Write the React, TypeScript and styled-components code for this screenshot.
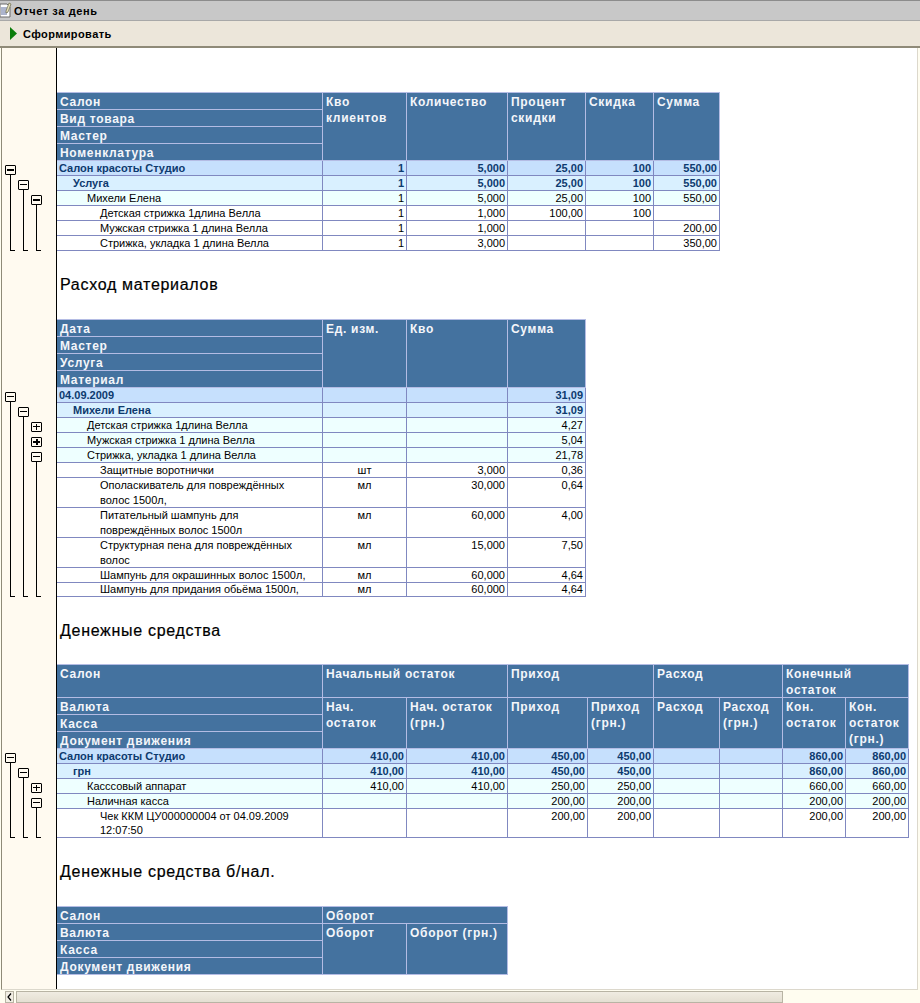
import React from 'react';
import styled, {createGlobalStyle} from 'styled-components';

const GlobalStyle = createGlobalStyle`
  html, body {
    margin: 0;
    padding: 0;
    height: 100%;
    overflow: hidden;
    background: #fffdf0;
  }
`;

// window chrome
const Window = styled.div`
  width: 920px;
  height: 1003px;
  display: flex;
  flex-direction: column;
  font-family: "Liberation Sans", Arial, sans-serif;
  background: #fffdf0;
`;

const TitleBar = styled.div`
  height: 21px;
  box-sizing: border-box;
  display: flex;
  align-items: center;
  gap: 2px;
  background: #c8c8c8;
  border-top: 1px solid #8c8c8c;
  border-bottom: 1px solid #a8a8a8;
  font-size: 11px;
  font-weight: bold;
  letter-spacing: 0.6px;
  color: #000;
`;

const Toolbar = styled.div`
  height: 27px;
  box-sizing: border-box;
  display: flex;
  align-items: center;
  gap: 6px;
  padding-left: 10px;
  background: #ece6da;
  border-bottom: 2px solid #8f8a78;
  font-size: 11px;
  font-weight: bold;
  letter-spacing: 0.4px;
  color: #000;
`;

const Sheet = styled.div`
  flex: 1;
  min-height: 0;
  margin-left: 1px;
  margin-right: 2px;
  display: flex;
  flex-direction: column;
  overflow: hidden;
  background: #fff;
  border-left: 1px solid #8f8a78;
  border-bottom: 1px solid #dcd8cc;
  border-right: 1px solid #dcd8cc;
`;

const Band = styled.div<{$h?: number; $fill?: boolean}>`
  display: flex;
  flex: ${props => props.$fill ? 1 : 'none'};
  height: ${props => props.$h ? props.$h + 'px' : 'auto'};
`;

const Gutter = styled.div`
  width: 54px;
  flex: none;
  box-sizing: content-box;
  background: #fffaf0;
  border-right: 1px solid #000;
`;

const Heading = styled.h2`
  margin: 0;
  padding-left: 3px;
  align-self: center;
  font-size: 16px;
  font-weight: normal;
  letter-spacing: 0.7px;
  -webkit-text-stroke: 0.2px #000;
  color: #000;
`;

const ScrollBar = styled.div`
  height: 13px;
  display: flex;
  gap: 2px;
  padding: 1px 0 0 5px;
  box-sizing: border-box;
`;

const ScrollArrow = styled.div`
  width: 7px;
  height: 10px;
  display: flex;
  align-items: center;
  justify-content: center;
  border: 1px solid #b8b4a4;
  background: #f2eee4;
`;

const ScrollThumb = styled.div`
  width: 765px;
  height: 10px;
  border: 1px solid #b8b4a4;
  background: linear-gradient(#f0ece2, #e4dfd2);
`;

// outline tree in the gutter
const Outline = styled.div<{$top: number; $rows: string}>`
  margin-top: ${props => props.$top}px;
  padding-left: 3px;
  display: grid;
  grid-template-columns: repeat(3, 13px);
  grid-template-rows: ${props => props.$rows};
`;

const Bracket = styled.div<{$level: number; $from: number; $to: number}>`
  grid-column: ${props => props.$level + 1};
  grid-row: ${props => props.$from} / ${props => props.$to};
  display: flex;
  flex-direction: column;
  padding-top: 4px;
`;

const Stem = styled.div`
  flex: 1;
  width: 5px;
  margin-left: 5px;
  box-sizing: border-box;
  border-left: 1px solid #000;
  border-bottom: 1px solid #000;
`;

const Leaf = styled.div<{$level: number; $row: number}>`
  grid-column: ${props => props.$level + 1};
  grid-row: ${props => props.$row};
  padding-top: 4px;
`;

const Toggle = styled.div<{$bold?: boolean}>`
  width: 11px;
  height: 10px;
  flex: none;
  box-sizing: border-box;
  position: relative;
  background: #fffaf0;
  border: 1px solid #000;
  border-radius: 1px;
  &::before {
    content: '';
    position: absolute;
    left: 1px;
    right: 1px;
    top: 3px;
    height: ${props => props.$bold ? 2 : 1}px;
    background: #000;
  }
`;

const PlusToggle = styled(Toggle)`
  &::after {
    content: '';
    position: absolute;
    top: 1px;
    bottom: 1px;
    left: 4px;
    width: ${props => props.$bold ? 2 : 1}px;
    margin-left: ${props => props.$bold ? -0.5 : 0}px;
    background: #000;
  }
`;

// report tables
const Report = styled.table<{$width: number}>`
  width: ${props => props.$width}px;
  table-layout: fixed;
  border-collapse: separate;
  border-spacing: 0;
  border-top: 1px solid #b4bce4;
  align-self: flex-start;
`;

const HeadCell = styled.th`
  box-sizing: border-box;
  padding: 0 3px;
  vertical-align: top;
  text-align: left;
  background: #44729f;
  border-right: 1px solid #b4bce4;
  border-bottom: 1px solid #b4bce4;
  color: #f4f6fa;
  font-size: 12px;
  line-height: 16px;
  font-weight: bold;
  letter-spacing: 0.7px;
  white-space: pre-line;
`;

// header text sits a pixel lower than the line box without growing the row
const HeadLabel = styled.div`
  margin: 1px 0 -1px;
`;

const LABEL_BG = ['#c6e0fd', '#d9f0ff', '#eeffff', '#ffffff'];

const Cell = styled.td<{$level: number; $lh?: number; $center?: boolean}>`
  box-sizing: border-box;
  padding: 0 2px 0 2px;
  vertical-align: top;
  text-align: ${props => props.$center ? 'center' : 'right'};
  background: ${props => LABEL_BG[props.$level]};
  border-right: 1px solid #8088c0;
  border-bottom: 1px solid #8088c0;
  color: ${props => props.$level < 2 ? '#0d3a6e' : '#000'};
  font-size: 11px;
  font-weight: ${props => props.$level < 2 ? 'bold' : 'normal'};
  line-height: ${props => props.$lh ?? 14}px;
  white-space: pre-line;
`;

const LabelCell = styled(Cell)`
  text-align: left;
  padding-left: ${props => [2, 16, 30, 43][props.$level]}px;
`;

const HeadRow = styled.tr<{$h: number}>`
  height: ${props => props.$h}px;
`;

const DataRow = styled.tr<{$h: number}>`
  height: ${props => props.$h}px;
`;

const Head: React.FC<{rowSpan?: number; colSpan?: number; children: React.ReactNode}> = ({rowSpan, colSpan, children}) => (
    <HeadCell rowSpan={rowSpan} colSpan={colSpan}><HeadLabel>{children}</HeadLabel></HeadCell>
);

const ReportIcon: React.FC = () => (
    <svg width="12" height="17" viewBox="0 0 12 17">
        <path d="M0 2h7l3 3v10H0z" fill="#fff" stroke="#6a6a6a"/>
        <path d="M1 6h6M1 8h7M1 10h7M1 12h6" stroke="#5a6a9a"/>
        <path d="M9 1l2 1-3 8-2 1 0-2z" fill="#e8e0b8" stroke="#6a6a4a" strokeWidth=".7"/>
    </svg>
);

type Row = {
    level: number;
    h?: number;
    lh?: number;
    label: string;
    cells: string[];
};

type Node = {kind: 'minus' | 'plus' | 'minusBold' | 'plusBold'; level: number; from: number; to?: number};

const Toggler: React.FC<{kind: Node['kind']}> = ({kind}) => {
    if (kind === 'plus') return <PlusToggle/>;
    if (kind === 'plusBold') return <PlusToggle $bold/>;
    return <Toggle $bold={kind === 'minusBold'}/>;
};

const Tree: React.FC<{top: number; rows: Row[]; nodes: Node[]}> = ({top, rows, nodes}) => (
    <Outline $top={top} $rows={rows.map(r => (r.h ?? 15) + 'px').join(' ')}>
        {nodes.map(n => n.to
            ? (
                <Bracket key={n.from} $level={n.level} $from={n.from} $to={n.to}>
                    <Toggler kind={n.kind}/>
                    <Stem/>
                </Bracket>
            )
            : (
                <Leaf key={n.from} $level={n.level} $row={n.from}>
                    <Toggler kind={n.kind}/>
                </Leaf>
            ))}
    </Outline>
);

const Body: React.FC<{rows: Row[]; center?: number}> = ({rows, center}) => (
    <tbody>
        {rows.map((r, i) => (
            <DataRow key={i} $h={r.h ?? 15}>
                <LabelCell $level={r.level} $lh={r.lh}>{r.label}</LabelCell>
                {r.cells.map((c, j) => (
                    <Cell key={j} $level={r.level} $lh={r.lh} $center={j === center}>{c}</Cell>
                ))}
            </DataRow>
        ))}
    </tbody>
);

const salonRows: Row[] = [
    {level: 0, label: 'Салон красоты Студио', cells: ['1', '5,000', '25,00', '100', '550,00']},
    {level: 1, label: 'Услуга', cells: ['1', '5,000', '25,00', '100', '550,00']},
    {level: 2, label: 'Михели Елена', cells: ['1', '5,000', '25,00', '100', '550,00']},
    {level: 3, label: 'Детская стрижка 1длина Велла', cells: ['1', '1,000', '100,00', '100', '']},
    {level: 3, label: 'Мужская стрижка 1 длина Велла', cells: ['1', '1,000', '', '', '200,00']},
    {level: 3, label: 'Стрижка, укладка 1 длина Велла', cells: ['1', '3,000', '', '', '350,00']},
];

const materialRows: Row[] = [
    {level: 0, label: '04.09.2009', cells: ['', '', '31,09']},
    {level: 1, label: 'Михели Елена', cells: ['', '', '31,09']},
    {level: 2, label: 'Детская стрижка 1длина Велла', cells: ['', '', '4,27']},
    {level: 2, label: 'Мужская стрижка 1 длина Велла', cells: ['', '', '5,04']},
    {level: 2, label: 'Стрижка, укладка 1 длина Велла', cells: ['', '', '21,78']},
    {level: 3, label: 'Защитные воротнички', cells: ['шт', '3,000', '0,36']},
    {level: 3, h: 30, lh: 14.5, label: 'Ополаскиватель для повреждённых\nволос 1500л,', cells: ['мл', '30,000', '0,64']},
    {level: 3, h: 30, lh: 14.5, label: 'Питательный шампунь для\nповреждённых волос 1500л', cells: ['мл', '60,000', '4,00']},
    {level: 3, h: 30, lh: 14.5, label: 'Структурная пена для повреждённых\nволос', cells: ['мл', '15,000', '7,50']},
    {level: 3, label: 'Шампунь для окрашинных волос 1500л,', cells: ['мл', '60,000', '4,64']},
    {level: 3, h: 14, lh: 13, label: 'Шампунь для придания обьёма 1500л,', cells: ['мл', '60,000', '4,64']},
];

const cashRows: Row[] = [
    {level: 0, label: 'Салон красоты Студио', cells: ['410,00', '410,00', '450,00', '450,00', '', '', '860,00', '860,00']},
    {level: 1, label: 'грн', cells: ['410,00', '410,00', '450,00', '450,00', '', '', '860,00', '860,00']},
    {level: 2, label: 'Касссовый аппарат', cells: ['410,00', '410,00', '250,00', '250,00', '', '', '660,00', '660,00']},
    {level: 2, label: 'Наличная касса', cells: ['', '', '200,00', '200,00', '', '', '200,00', '200,00']},
    {level: 3, h: 29, label: 'Чек ККМ ЦУ000000004 от 04.09.2009\n12:07:50', cells: ['', '', '200,00', '200,00', '', '', '200,00', '200,00']},
];

const App: React.FC = () => (
    <Window>
        <GlobalStyle/>
        <TitleBar><ReportIcon/>Отчет за день</TitleBar>
        <Toolbar>
            <svg width="7" height="13" viewBox="0 0 7 13"><path d="M0 0l7 6.5L0 13z" fill="#0b7d0b"/></svg>
            Сформировать
        </Toolbar>
        <Sheet>
            <Band $h={44}><Gutter/></Band>

            <Band>
                <Gutter>
                    <Tree top={69} rows={salonRows} nodes={[
                        {kind: 'minusBold', level: 0, from: 1, to: 7},
                        {kind: 'minus', level: 1, from: 2, to: 7},
                        {kind: 'minusBold', level: 2, from: 3, to: 7},
                    ]}/>
                </Gutter>
                <Report $width={663}>
                    <colgroup><col width="266"/><col width="84"/><col width="101"/><col width="78"/><col width="68"/><col width="66"/></colgroup>
                    <thead>
                        <HeadRow $h={17}>
                            <Head>Салон</Head>
                            <Head rowSpan={4}>Кво клиентов</Head>
                            <Head rowSpan={4}>Количество</Head>
                            <Head rowSpan={4}>Процент скидки</Head>
                            <Head rowSpan={4}>Скидка</Head>
                            <Head rowSpan={4}>Сумма</Head>
                        </HeadRow>
                        <HeadRow $h={17}><Head>Вид товара</Head></HeadRow>
                        <HeadRow $h={17}><Head>Мастер</Head></HeadRow>
                        <HeadRow $h={17}><Head>Номенклатура</Head></HeadRow>
                    </thead>
                    <Body rows={salonRows}/>
                </Report>
            </Band>

            <Band $h={68}><Gutter/><Heading>Расход материалов</Heading></Band>

            <Band>
                <Gutter>
                    <Tree top={69} rows={materialRows} nodes={[
                        {kind: 'minus', level: 0, from: 1, to: 12},
                        {kind: 'minus', level: 1, from: 2, to: 12},
                        {kind: 'plus', level: 2, from: 3},
                        {kind: 'plusBold', level: 2, from: 4},
                        {kind: 'minus', level: 2, from: 5, to: 12},
                    ]}/>
                </Gutter>
                <Report $width={529}>
                    <colgroup><col width="266"/><col width="84"/><col width="101"/><col width="78"/></colgroup>
                    <thead>
                        <HeadRow $h={17}>
                            <Head>Дата</Head>
                            <Head rowSpan={4}>Ед. изм.</Head>
                            <Head rowSpan={4}>Кво</Head>
                            <Head rowSpan={4}>Сумма</Head>
                        </HeadRow>
                        <HeadRow $h={17}><Head>Мастер</Head></HeadRow>
                        <HeadRow $h={17}><Head>Услуга</Head></HeadRow>
                        <HeadRow $h={17}><Head>Материал</Head></HeadRow>
                    </thead>
                    <Body rows={materialRows} center={0}/>
                </Report>
            </Band>

            <Band $h={67}><Gutter/><Heading>Денежные средства</Heading></Band>

            <Band>
                <Gutter>
                    <Tree top={85} rows={cashRows} nodes={[
                        {kind: 'minus', level: 0, from: 1, to: 6},
                        {kind: 'minus', level: 1, from: 2, to: 6},
                        {kind: 'plus', level: 2, from: 3},
                        {kind: 'minus', level: 2, from: 4, to: 6},
                    ]}/>
                </Gutter>
                <Report $width={852}>
                    <colgroup><col width="266"/><col width="84"/><col width="101"/><col width="80"/><col width="66"/><col width="66"/><col width="63"/><col width="63"/><col width="63"/></colgroup>
                    <thead>
                        <HeadRow $h={33}>
                            <Head>Салон</Head>
                            <Head colSpan={2}>Начальный остаток</Head>
                            <Head colSpan={2}>Приход</Head>
                            <Head colSpan={2}>Расход</Head>
                            <Head colSpan={2}>{'Конечный\nостаток'}</Head>
                        </HeadRow>
                        <HeadRow $h={17}>
                            <Head>Валюта</Head>
                            <Head rowSpan={3}>{'Нач.\nостаток'}</Head>
                            <Head rowSpan={3}>{'Нач. остаток\n(грн.)'}</Head>
                            <Head rowSpan={3}>Приход</Head>
                            <Head rowSpan={3}>{'Приход\n(грн.)'}</Head>
                            <Head rowSpan={3}>Расход</Head>
                            <Head rowSpan={3}>{'Расход\n(грн.)'}</Head>
                            <Head rowSpan={3}>{'Кон.\nостаток'}</Head>
                            <Head rowSpan={3}>{'Кон.\nостаток\n(грн.)'}</Head>
                        </HeadRow>
                        <HeadRow $h={17}><Head>Касса</Head></HeadRow>
                        <HeadRow $h={17}><Head>Документ движения</Head></HeadRow>
                    </thead>
                    <Body rows={cashRows}/>
                </Report>
            </Band>

            <Band $h={68}><Gutter/><Heading>Денежные средства б/нал.</Heading></Band>

            <Band>
                <Gutter/>
                <Report $width={451}>
                    <colgroup><col width="266"/><col width="84"/><col width="101"/></colgroup>
                    <thead>
                        <HeadRow $h={17}>
                            <Head>Салон</Head>
                            <Head colSpan={2}>Оборот</Head>
                        </HeadRow>
                        <HeadRow $h={17}>
                            <Head>Валюта</Head>
                            <Head rowSpan={3}>Оборот</Head>
                            <Head rowSpan={3}>Оборот (грн.)</Head>
                        </HeadRow>
                        <HeadRow $h={17}><Head>Касса</Head></HeadRow>
                        <HeadRow $h={17}><Head>Документ движения</Head></HeadRow>
                    </thead>
                </Report>
            </Band>

            <Band $fill><Gutter/></Band>
        </Sheet>
        <ScrollBar>
            <ScrollArrow>
                <svg width="5" height="8" viewBox="0 0 5 8"><path d="M4 0.5L1 4l3 3.5" fill="none" stroke="#000" strokeWidth="1.2"/></svg>
            </ScrollArrow>
            <ScrollThumb/>
        </ScrollBar>
    </Window>
);

export default App;
